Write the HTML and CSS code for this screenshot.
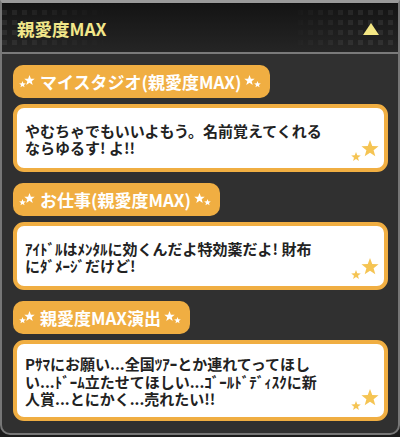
FILE: index.html
```html
<!DOCTYPE html>
<html lang="ja">
<head>
  <meta charset="UTF-8">
  <meta name="viewport" content="width=device-width, initial-scale=1.0">
  <title>親愛度MAX</title>
  <link rel="stylesheet" href="styles.css">
</head>
<body>

  <svg class="defs" width="0" height="0">
    <symbol id="star" viewBox="0 0 20 20">
      <polygon points="10,0 12.5,6.6 19.5,6.9 14,11.3 15.9,18.1 10,14.2 4.1,18.1 6,11.3 0.5,6.9 7.5,6.6"/>
    </symbol>
  </svg>

  <div class="panel">
    <!-- ヘッダー -->
    <div class="panel-head">
      <h1>親愛度MAX</h1>
      <svg class="toggle" width="16" height="12" viewBox="0 0 16 12">
        <polygon points="8,0 16,12 0,12"/>
      </svg>
    </div>

    <div class="panel-body">

      <div class="entry">
        <div class="label">
          <svg class="spark" width="18" height="14"><use href="#star" x="0" y="6" width="7" height="7"/><use href="#star" x="5" y="0" width="11" height="11"/></svg>
          <span>マイスタジオ(親愛度MAX)</span>
          <svg class="spark" width="18" height="14"><use href="#star" x="0" y="0" width="11" height="11"/><use href="#star" x="10" y="6" width="7" height="7"/></svg>
        </div>
        <div class="bubble">
          <p>やむちゃでもいいよもう。名前覚えてくれる<br>ならゆるす! よ!!</p>
          <svg class="corner" width="30" height="24"><use href="#star" x="0" y="12" width="10" height="10"/><use href="#star" x="10" y="0" width="18" height="18"/></svg>
        </div>
      </div>

      <div class="entry">
        <div class="label">
          <svg class="spark" width="18" height="14"><use href="#star" x="0" y="6" width="7" height="7"/><use href="#star" x="5" y="0" width="11" height="11"/></svg>
          <span>お仕事(親愛度MAX)</span>
          <svg class="spark" width="18" height="14"><use href="#star" x="0" y="0" width="11" height="11"/><use href="#star" x="10" y="6" width="7" height="7"/></svg>
        </div>
        <div class="bubble">
          <p>ｱｲﾄﾞﾙはﾒﾝﾀﾙに効くんだよ特効薬だよ! 財布<br>にﾀﾞﾒｰｼﾞだけど!</p>
          <svg class="corner" width="30" height="24"><use href="#star" x="0" y="12" width="10" height="10"/><use href="#star" x="10" y="0" width="18" height="18"/></svg>
        </div>
      </div>

      <div class="entry">
        <div class="label">
          <svg class="spark" width="18" height="14"><use href="#star" x="0" y="6" width="7" height="7"/><use href="#star" x="5" y="0" width="11" height="11"/></svg>
          <span>親愛度MAX演出</span>
          <svg class="spark" width="18" height="14"><use href="#star" x="0" y="0" width="11" height="11"/><use href="#star" x="10" y="6" width="7" height="7"/></svg>
        </div>
        <div class="bubble">
          <p>Pｻﾏにお願い...全国ﾂｱｰとか連れてってほし<br>い...ﾄﾞｰﾑ立たせてほしい...ｺﾞｰﾙﾄﾞﾃﾞｨｽｸに新<br>人賞...とにかく...売れたい!!</p>
          <svg class="corner" width="30" height="24"><use href="#star" x="0" y="12" width="10" height="10"/><use href="#star" x="10" y="0" width="18" height="18"/></svg>
        </div>
      </div>

    </div>
  </div>

</body>
</html>
```

FILE: styles.css
```css
* {
  box-sizing: border-box;
}

body {
  margin: 0;
  padding: 0;
  background-color: #1b1b1b;
  font-family: 'Noto Sans CJK JP', 'Noto Sans', sans-serif;
}

.defs {
  position: absolute;
}

.panel {
  width: 400px;
  height: 435px;
  border: 2px solid #777;
  border-top: 3px solid #9a9a9a;
  border-radius: 0 0 10px 10px;
  background-color: #303030;
  overflow: hidden;
}

/* ヘッダー */
.panel-head {
  position: relative;
  height: 51px;
  display: flex;
  align-items: center;
  justify-content: space-between;
  padding: 0 19px 0 15px;
  background: linear-gradient(#141414, #252525);
  border-top: 1px solid #111;
  border-bottom: 2px solid #7a7a7a;
}

.panel-head::before,
.panel-head::after {
  content: "";
  position: absolute;
  top: 6px;
  bottom: 6px;
  width: 110px;
  background: conic-gradient(at 5px 5px, transparent 75%, rgba(255, 255, 255, 0.07) 0) 0 0 / 10px 10px;
}

.panel-head::before {
  left: 0;
  -webkit-mask-image: linear-gradient(to right, #000, transparent);
  mask-image: linear-gradient(to right, #000, transparent);
}

.panel-head::after {
  right: 0;
  -webkit-mask-image: linear-gradient(to left, #000 40%, transparent);
  mask-image: linear-gradient(to left, #000 40%, transparent);
}

.panel-head h1 {
  position: relative;
  z-index: 1;
  margin: 0;
  font-size: 17.5px;
  font-weight: 700;
  color: #f2e78a;
}

.toggle {
  position: relative;
  z-index: 1;
  fill: #f4e784;
  margin-top: 2px;
}

/* 本文 */
.panel-body {
  display: flex;
  flex-direction: column;
  gap: 11px;
  padding: 11px 10px 0 11px;
}

.entry {
  display: flex;
  flex-direction: column;
  align-items: flex-start;
  gap: 6px;
}

.label {
  display: flex;
  align-items: center;
  gap: 3px;
  height: 33px;
  padding: 0 8px 0 6px;
  background-color: #f0ae42;
  border-radius: 10px;
  color: #fff;
  font-size: 17px;
  font-weight: 700;
}

.spark {
  fill: #fff;
}

.bubble {
  position: relative;
  width: 100%;
  min-height: 68px;
  display: flex;
  align-items: center;
  padding: 11px 8px 9px 8px;
  background-color: #fff;
  border: 4px solid #f0ae42;
  border-radius: 11px;
}

.bubble p {
  margin: 0;
  font-size: 15px;
  font-weight: 700;
  line-height: 17.5px;
  color: #222;
}

.corner {
  position: absolute;
  right: 3px;
  bottom: 4px;
  fill: #f5c453;
}
```
